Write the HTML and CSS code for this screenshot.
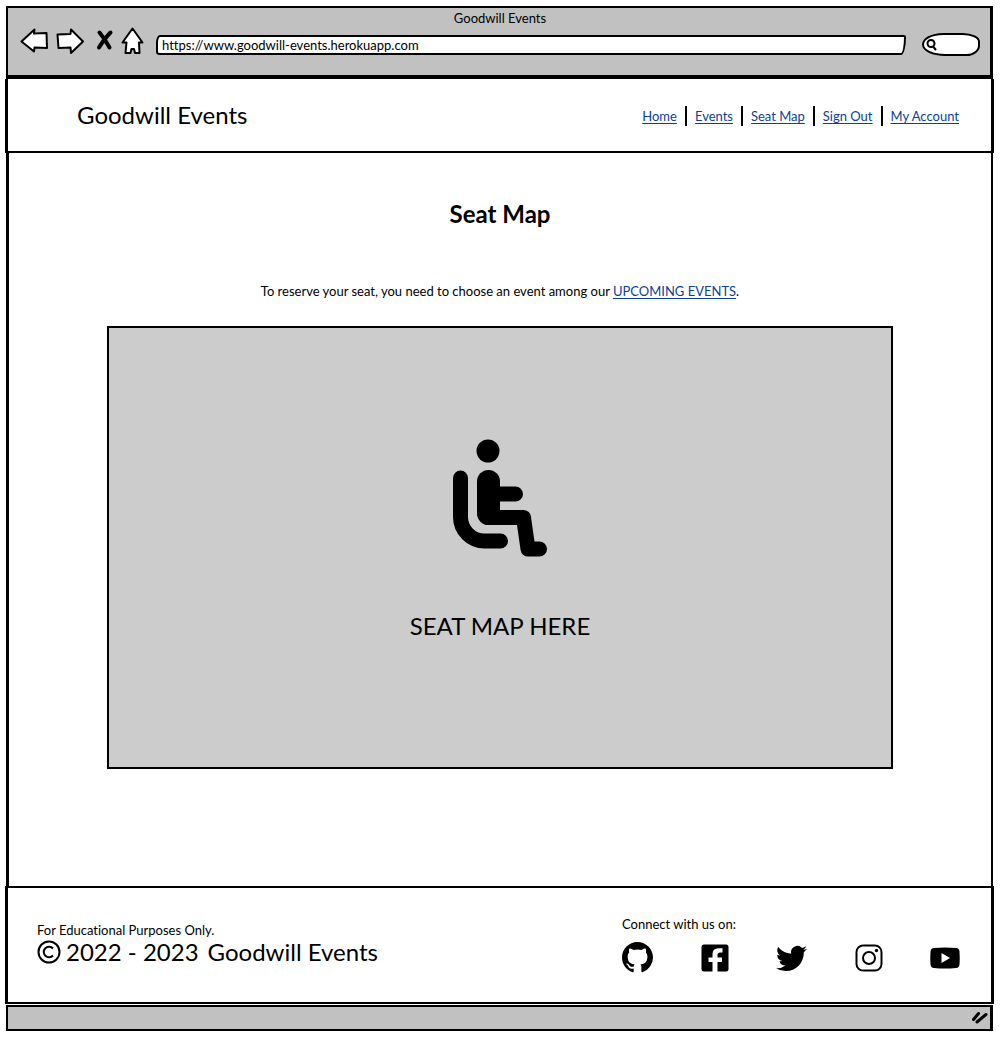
FILE: index.html
```html
<!DOCTYPE html>
<html lang="en">
<head>
<meta charset="utf-8">
<meta name="viewport" content="width=device-width, initial-scale=1">
<title>Goodwill Events</title>
<link rel="stylesheet" href="styles.css">
</head>
<body>
<div class="window">
  <div class="chrome">
    <div class="chrome-title">Goodwill Events</div>
    <div class="toolbar">
      <div class="tools">
        <button class="tool" aria-label="Back"><svg width="28" height="28" viewBox="0 0 28 28"><path class="sketch" d="M1.500 14.500L14.500 2.500L14 6.500L26.500 6L27 21L14.500 20.500L14 24.500Z"/></svg></button>
        <button class="tool tool-forward" aria-label="Forward"><svg width="28" height="28" viewBox="0 0 28 28"><path class="sketch" d="M27 14.500L15 2.500L14.500 7L1.500 7.500L2.500 21L14.500 20.500L15 26Z"/></svg></button>
        <button class="tool tool-stop" aria-label="Stop"><svg width="18" height="28" viewBox="0 0 18 28"><path class="cross" d="M3.500 5.500Q8 11 13.500 20.500M14.500 5.500Q9 11 3 20.500"/></svg></button>
        <button class="tool" aria-label="Home"><svg width="24" height="28" viewBox="0 0 24 28"><path class="sketch" d="M11.500 1.500L1.500 15.500H5.500L4.500 26H9.500L10.500 22H13L14 26H18.500L18 15.500H21.500Z"/></svg></button>
      </div>
      <input class="address" type="text" aria-label="Address" value="https://www.goodwill-events.herokuapp.com">
      <label class="search">
        <svg width="12" height="14" viewBox="0 0 12 14"><circle cx="5" cy="5.500" r="3.500"/><path d="M7 8.500L10 12"/></svg>
        <input type="text" aria-label="Search">
      </label>
    </div>
  </div>

  <header class="site-header">
    <div class="brand">Goodwill Events</div>
    <nav>
      <ul class="nav">
        <li><a href="#">Home</a></li>
        <li><a href="#">Events</a></li>
        <li><a href="#">Seat Map</a></li>
        <li><a href="#">Sign Out</a></li>
        <li><a href="#">My Account</a></li>
      </ul>
    </nav>
  </header>

  <main class="content">
    <h1>Seat Map</h1>
    <p class="intro">To reserve your seat, you need to choose an event among our <a href="#">UPCOMING EVENTS</a>.</p>
    <section class="seat-map">
      <svg width="96" height="120" viewBox="22 19 96 120" aria-hidden="true">
        <circle cx="58" cy="32" r="11.500"/>
        <rect x="47" y="51" width="23" height="55" rx="11.500"/>
        <path class="limb" d="M30.500 59V98A24 24 0 0 0 54.500 122H70.500M60 75H85.500M58 98.500H93.500L98 130H109.500"/>
      </svg>
      <div class="seat-caption">SEAT MAP HERE</div>
    </section>
  </main>

  <footer class="site-footer">
    <div class="legal">
      <div>For Educational Purposes Only.</div>
      <div class="copyright">
        <svg width="24" height="24" viewBox="0 0 24 24" role="img" aria-label="Copyright"><circle cx="12" cy="12" r="10.500"/><path d="M16 8.500A5.300 5.300 0 1 0 16 15.500"/></svg>
        <span>2022 - 2023</span>
        <span class="owner">Goodwill Events</span>
      </div>
    </div>
    <div class="connect">
      <div>Connect with us on:</div>
      <div class="social">
        <a href="#" aria-label="GitHub"><svg width="31" height="31" viewBox="0 0 16 16"><path d="M8 0C3.58 0 0 3.58 0 8c0 3.540 2.290 6.530 5.470 7.590.4.070.550-.170.550-.380 0-.190-.010-.820-.010-1.490-2.010.370-2.530-.490-2.690-.940-.090-.230-.480-.940-.820-1.130-.280-.150-.680-.520-.010-.530.630-.010 1.080.580 1.230.820.720 1.210 1.870.870 2.330.660.070-.520.280-.870.510-1.070-1.780-.2-3.640-.890-3.640-3.950 0-.870.310-1.590.820-2.150-.080-.2-.360-1.020.080-2.120 0 0 .670-.210 2.200.820.640-.180 1.320-.270 2-.270.680 0 1.360.090 2 .270 1.530-1.040 2.200-.820 2.200-.820.440 1.100.160 1.920.080 2.120.510.560.820 1.270.820 2.150 0 3.070-1.870 3.750-3.650 3.950.290.250.540.730.540 1.480 0 1.070-.010 1.930-.010 2.200 0 .210.150.460.550.380A8.013 8.013 0 0 0 16 8c0-4.420-3.580-8-8-8z"/></svg></a>
        <a href="#" aria-label="Facebook"><svg width="28" height="28" viewBox="0 0 28 28"><path d="M3 .5H25A2.500 2.500 0 0 1 27.500 3V25A2.500 2.500 0 0 1 25 27.500H16.500V18H21V13.500H16.500V11Q16.500 8.500 19 8.500H21.500V4.300H17.500Q11.500 4.300 11.500 10.500V13.500H7.500V18H11.500V27.500H3A2.500 2.500 0 0 1 .5 25V3A2.500 2.500 0 0 1 3 .5Z"/></svg></a>
        <a href="#" aria-label="Twitter"><svg width="31" height="31" viewBox="0 0 16 16"><path d="M5.026 15c6.038 0 9.341-5.003 9.341-9.334 0-.14 0-.282-.006-.422A6.685 6.685 0 0 0 16 3.542a6.658 6.658 0 0 1-1.889.518 3.301 3.301 0 0 0 1.447-1.817 6.533 6.533 0 0 1-2.087.793A3.286 3.286 0 0 0 7.875 6.030a9.325 9.325 0 0 1-6.767-3.429 3.289 3.289 0 0 0 1.018 4.382A3.323 3.323 0 0 1 .64 6.575v.045a3.288 3.288 0 0 0 2.632 3.218 3.203 3.203 0 0 1-.865.115 3.230 3.230 0 0 1-.614-.057 3.283 3.283 0 0 0 3.067 2.277A6.588 6.588 0 0 1 .78 13.580a6.320 6.320 0 0 1-.78-.045A9.344 9.344 0 0 0 5.026 15z"/></svg></a>
        <a href="#" aria-label="Instagram"><svg width="28" height="28" viewBox="0 0 28 28"><rect class="line" x="1.500" y="1.500" width="25" height="25" rx="6.500"/><circle class="line" cx="14" cy="14" r="6"/><circle cx="21.500" cy="6.500" r="1.700"/></svg></a>
        <a href="#" aria-label="YouTube"><svg width="30" height="22" viewBox="0 0 30 22"><path d="M4 1Q15 0 26 1Q29.300 1 29.500 4.500Q30 11 29.500 17.500Q29.300 20.800 26 21Q15 22 4 21Q.8 20.800.5 17.500Q0 11 .5 4.500Q.8 1 4 1ZM11.500 6V16L20 11Z"/></svg></a>
      </div>
    </div>
  </footer>

  <div class="statusbar">
    <svg width="16" height="14" viewBox="0 0 16 14" aria-hidden="true"><path d="M1.500 8.500L6.500 2.500M5 11L14 3.500"/></svg>
  </div>
</div>
</body>
</html>
```
FILE: styles.css
```css
* {
  box-sizing: border-box;
}

body {
  margin: 0;
  background: #fff;
  color: #000;
  font-family: Lato, "Liberation Sans", sans-serif;
  font-size: 13px;
  font-variant-ligatures: none;
  line-height: 16px;
}

a {
  color: #0b4296;
  text-underline-offset: 2px;
}

svg {
  display: block;
}

.window {
  display: flex;
  flex-direction: column;
  min-height: 100vh;
  padding: 6px 7px 9px 6px;
}

/* Browser chrome */
.chrome {
  height: 73px;
  padding: 3px 10px 0 12px;
  background: #c1c1c1;
  border: 2px solid #000;
  border-right-width: 3px;
  border-bottom-width: 4px;
}

.chrome-title {
  line-height: 14px;
  text-align: center;
}

.toolbar {
  display: flex;
  align-items: center;
}

.tools {
  display: flex;
  width: 136px;
}

.tool {
  padding: 0;
  border: 0;
  background: none;
}

.tool-forward {
  margin-left: 8px;
}

.tool-stop {
  margin: 0 7px 0 12px;
}

.sketch {
  fill: #fff;
  stroke: #000;
  stroke-width: 2;
  stroke-linejoin: round;
}

.cross {
  fill: none;
  stroke: #000;
  stroke-width: 4;
  stroke-linecap: round;
}

.address,
.search {
  border: 2px solid #000;
  background: #fff;
}

.address {
  flex: 1;
  min-width: 0;
  height: 20px;
  margin-top: 8px;
  padding: 0 4px;
  border-radius: 4px 2px 5px 4px / 8px 2px 18px 3px;
  font: inherit;
}

.search {
  display: flex;
  align-items: center;
  width: 58px;
  height: 23px;
  margin: 8px 0 0 16px;
  padding-left: 2px;
  border-radius: 22px 18px 14px 24px / 12px 9px 11px 12px;
}

.search svg {
  flex: none;
  fill: none;
  stroke: #000;
  stroke-width: 2;
}

.search input {
  width: 100%;
  min-width: 0;
  padding: 0;
  border: 0;
  background: none;
  font: inherit;
}

/* Site header and footer stand slightly proud of the window frame */
.site-header,
.site-footer {
  display: flex;
  justify-content: space-between;
  margin: 0 -1px;
  border: solid #000;
}

.site-header {
  align-items: center;
  height: 74px;
  padding: 0 32px 0 69px;
  border-width: 0 3px 2px;
}

.brand,
.copyright,
.seat-caption {
  font-size: 24px;
  line-height: 28px;
}

.nav {
  display: flex;
  margin: 2px 0 0;
  padding: 0;
  list-style: none;
  line-height: 20px;
}

.nav li + li {
  margin-left: 8px;
  padding-left: 8px;
  border-left: 2px solid #000;
}

/* Page content */
.content {
  display: flex;
  flex: 1;
  flex-direction: column;
  align-items: center;
  padding: 47px 32px;
  border: solid #000;
  border-width: 0 2px 0 3px;
}

h1 {
  margin: 0;
  font-size: 24px;
  line-height: 28px;
}

.intro {
  margin: 55px 0 27px;
}

.seat-map {
  display: flex;
  flex-direction: column;
  align-items: center;
  gap: 54px;
  width: 100%;
  max-width: 786px;
  padding: 110px 16px 127px;
  border: 2px solid #000;
  background: #ccc;
}

.limb {
  fill: none;
  stroke: #000;
  stroke-width: 15;
  stroke-linecap: round;
  stroke-linejoin: round;
}

/* Site footer */
.site-footer {
  min-height: 118px;
  padding: 28px 31px 0 29px;
  border-width: 2px 3px;
}

.legal {
  padding-top: 6px;
}

.copyright {
  display: flex;
  align-items: center;
  gap: 5px;
}

.copyright svg {
  fill: none;
  stroke: #000;
  stroke-width: 2;
}

.owner {
  margin-left: 4px;
}

.connect {
  width: 338px;
}

.social {
  display: flex;
  align-items: center;
  justify-content: space-between;
  margin-top: 10px;
}

.social a {
  color: #000;
}

.social svg {
  fill: currentColor;
  fill-rule: evenodd;
}

.social .line {
  fill: none;
  stroke: currentColor;
  stroke-width: 2;
}

.statusbar {
  display: flex;
  align-items: center;
  justify-content: flex-end;
  height: 26px;
  margin-top: 1px;
  padding-right: 2px;
  border: 2px solid #000;
  border-right-width: 3px;
  background: #c1c1c1;
}

.statusbar path {
  stroke: #000;
  stroke-width: 3;
  stroke-linecap: round;
}
```
